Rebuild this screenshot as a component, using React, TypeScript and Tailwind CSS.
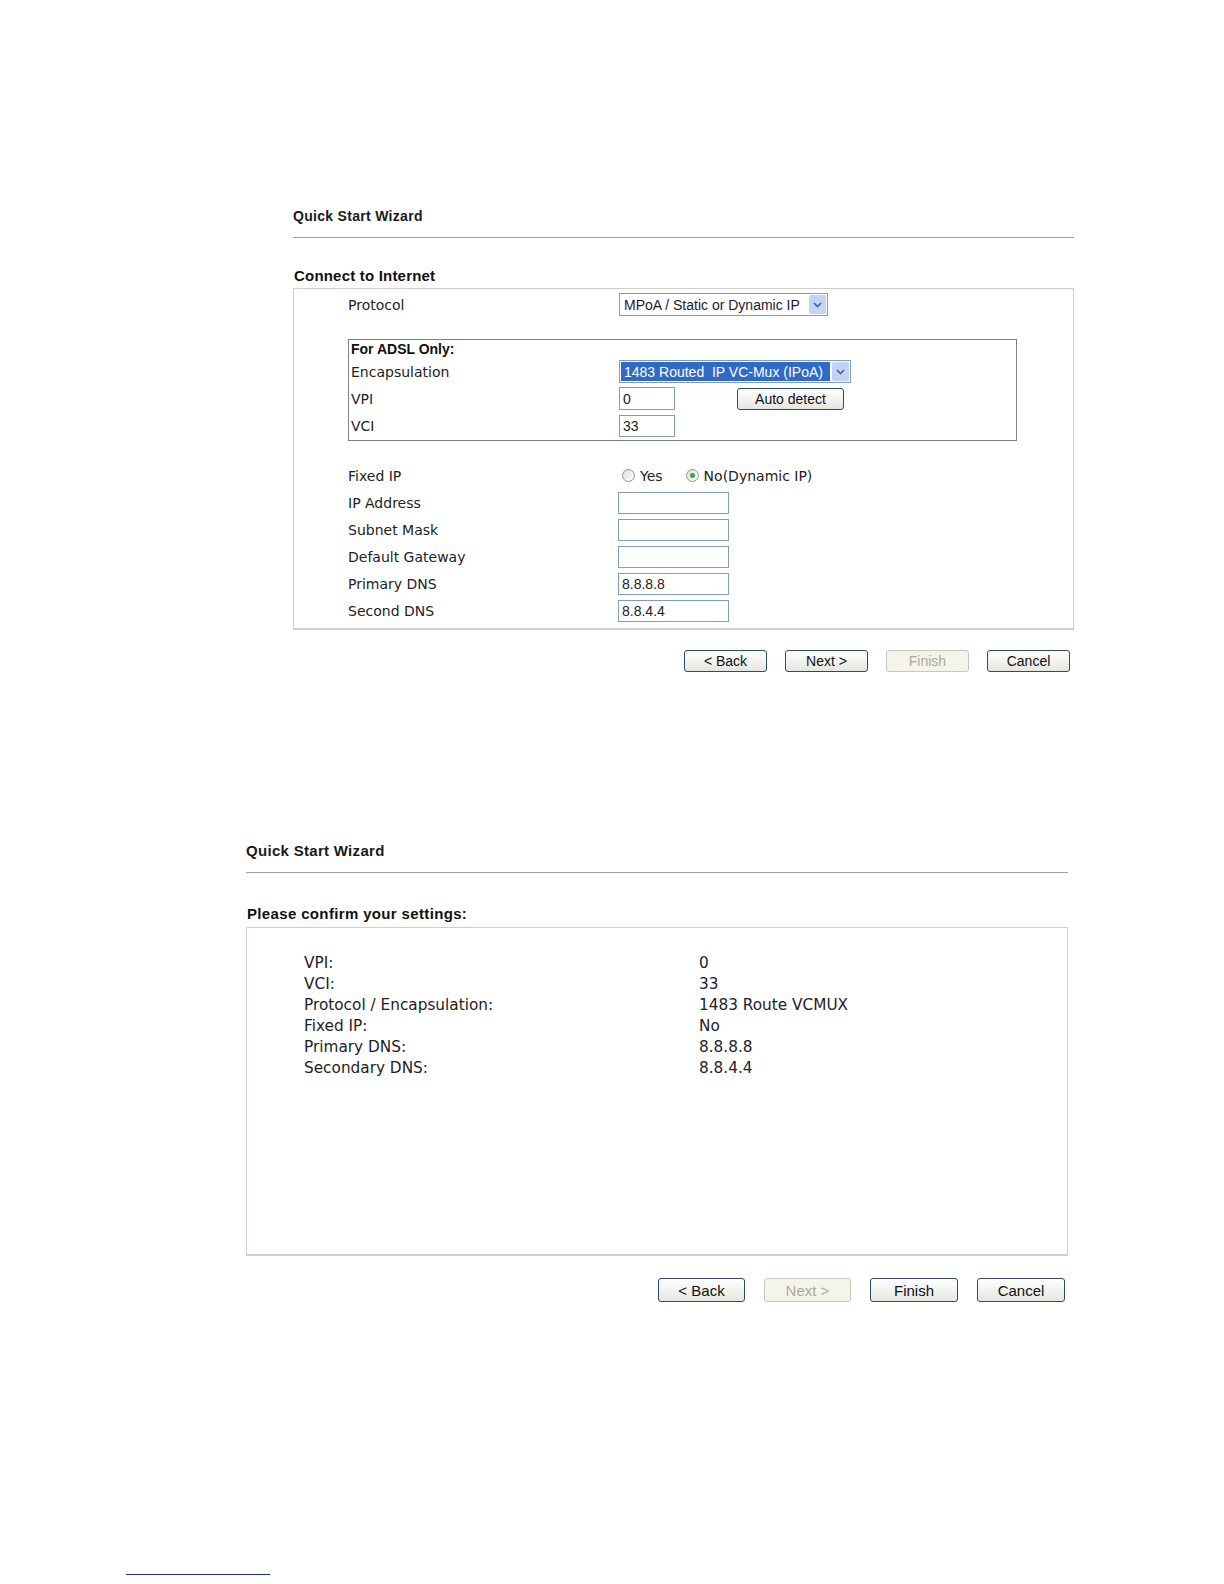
import React from "react";

const verdana = "font-['DejaVu_Sans',Verdana,sans-serif]";
const arial = "font-['Liberation_Sans',Arial,sans-serif]";

function Chevron() {
  return (
    <svg width="9" height="6" viewBox="0 0 9 6">
      <polyline points="1,1 4.5,4.5 8,1" fill="none" stroke="#4d6185" strokeWidth="1.6" />
    </svg>
  );
}

function Select({ text, width, highlighted }: { text: string; width: string; highlighted?: boolean }) {
  return (
    <div className={`flex h-[23px] items-center border border-[#7f9db9] bg-white p-[1px] ${width} ${arial}`}>
      <div
        className={`flex h-full flex-1 items-center whitespace-pre px-[3px] text-[14px] leading-none ${
          highlighted ? "bg-[#316ac5] text-white" : "text-[#1a1a2e]"
        }`}
      >
        {text}
      </div>
      <div className="ml-[2px] flex h-full w-[17px] items-center justify-center rounded-[2px] bg-[#c1d3fb]">
        <Chevron />
      </div>
    </div>
  );
}

function Input({ value, width, height = "h-[22px]" }: { value?: string; width: string; height?: string }) {
  return (
    <div
      className={`flex items-center border border-[#7f9db9] bg-white pl-[3px] text-[14px] leading-none text-[#222] ${width} ${height} ${arial}`}
    >
      {value}
    </div>
  );
}

function Radio({ checked }: { checked?: boolean }) {
  return (
    <span className="flex h-[13px] w-[13px] items-center justify-center rounded-full border border-[#8a9aa8] bg-gradient-to-br from-[#dcdcd6] to-white">
      {checked && <span className="h-[5px] w-[5px] rounded-full bg-[#3ea53e]" />}
    </span>
  );
}

function Button({
  label,
  disabled,
  size = "h-[22px] w-[83px] text-[14px]",
}: {
  label: string;
  disabled?: boolean;
  size?: string;
}) {
  return (
    <div
      className={`flex items-center justify-center rounded-[3px] border leading-none ${size} ${arial} ${
        disabled
          ? "border-[#c9c7ba] bg-[#f5f4ea] text-[#aca899]"
          : "border-[#2c4a6b] bg-gradient-to-b from-white to-[#e6e6e0] text-[#111]"
      }`}
    >
      {label}
    </div>
  );
}

function FormRow({ label, children }: { label: string; children?: React.ReactNode }) {
  return (
    <div className="grid h-[27px] grid-cols-[270px_1fr] items-center">
      <span className="text-[14px] leading-none text-[#222]">{label}</span>
      <div className="flex items-center">{children}</div>
    </div>
  );
}

function ConnectStep() {
  return (
    <div className={`ml-[293px] w-[781px] pt-[207px] ${verdana}`}>
      <div className={`h-[18px] text-[14px] font-bold leading-[18px] tracking-[0.3px] text-[#1a1a1a] ${arial}`}>
        Quick Start Wizard
      </div>
      <div className="mt-[12px] border-t border-[#a0a0a0]" />
      <div className={`mt-[29px] ml-[1px] h-[18px] text-[15px] font-bold leading-[18px] tracking-[0.2px] text-[#111] ${arial}`}>
        Connect to Internet
      </div>
      <div className="mt-[3px] border border-b-2 border-[#cfcfc8] pl-[54px] pt-[4px] pb-[4px]">
        <div className="grid h-[23px] grid-cols-[271px_1fr] items-center">
          <span className="text-[14px] leading-none text-[#222]">Protocol</span>
          <Select text="MPoA / Static or Dynamic IP" width="w-[209px]" />
        </div>

        <div className="mt-[23px] mr-[56px] border border-[#808080] pl-[2px] pb-[3px]">
          <div className={`h-[18px] text-[14px] font-bold leading-[18px] text-[#111] ${arial}`}>For ADSL Only:</div>
          <div className="mt-[2px] grid h-[23px] grid-cols-[268px_1fr] items-center">
            <span className="text-[14px] leading-none text-[#222]">Encapsulation</span>
            <Select text="1483 Routed  IP VC-Mux (IPoA)" width="w-[232px]" highlighted />
          </div>
          <div className="mt-[4px] grid h-[23px] grid-cols-[268px_1fr] items-center">
            <span className="text-[14px] leading-none text-[#222]">VPI</span>
            <div className="flex items-center">
              <Input value="0" width="w-[56px]" height="h-[23px]" />
              <div className="ml-[62px]">
                <Button label="Auto detect" size="h-[22px] w-[107px] text-[14px]" />
              </div>
            </div>
          </div>
          <div className="mt-[5px] grid h-[22px] grid-cols-[268px_1fr] items-center">
            <span className="text-[14px] leading-none text-[#222]">VCI</span>
            <Input value="33" width="w-[56px]" />
          </div>
        </div>

        <div className="mt-[21px]">
          <FormRow label="Fixed IP">
            <div className="ml-[4px] flex items-center gap-[5px] text-[14px] leading-none text-[#222]">
              <Radio />
              <span>Yes</span>
              <span className="ml-[13px]" />
              <Radio checked />
              <span>No(Dynamic IP)</span>
            </div>
          </FormRow>
          <FormRow label="IP Address">
            <Input width="w-[111px]" />
          </FormRow>
          <FormRow label="Subnet Mask">
            <Input width="w-[111px]" />
          </FormRow>
          <FormRow label="Default Gateway">
            <Input width="w-[111px]" />
          </FormRow>
          <FormRow label="Primary DNS">
            <Input value="8.8.8.8" width="w-[111px]" />
          </FormRow>
          <FormRow label="Second DNS">
            <Input value="8.8.4.4" width="w-[111px]" />
          </FormRow>
        </div>
      </div>
      <div className="mt-[20px] mr-[4px] flex justify-end gap-[18px]">
        <Button label="< Back" />
        <Button label="Next >" />
        <Button label="Finish" disabled />
        <Button label="Cancel" />
      </div>
    </div>
  );
}

const summary = [
  ["VPI:", "0"],
  ["VCI:", "33"],
  ["Protocol / Encapsulation:", "1483 Route VCMUX"],
  ["Fixed IP:", "No"],
  ["Primary DNS:", "8.8.8.8"],
  ["Secondary DNS:", "8.8.4.4"],
];

function ConfirmStep() {
  return (
    <div className={`ml-[246px] w-[822px] mt-[170px] ${verdana}`}>
      <div className={`h-[18px] text-[15px] font-bold leading-[18px] tracking-[0.3px] text-[#1a1a1a] ${arial}`}>
        Quick Start Wizard
      </div>
      <div className="mt-[12px] border-t border-[#a0a0a0]" />
      <div className={`mt-[32px] ml-[1px] h-[18px] text-[15px] font-bold leading-[18px] tracking-[0.35px] text-[#111] ${arial}`}>
        Please confirm your settings:
      </div>
      <div className="mt-[4px] h-[329px] border border-b-2 border-[#cfcfc8] pl-[57px] pt-[25px]">
        {summary.map(([label, value]) => (
          <div key={label} className="grid h-[21px] grid-cols-[395px_1fr] items-center text-[15.3px] leading-none text-[#222]">
            <span>{label}</span>
            <span>{value}</span>
          </div>
        ))}
      </div>
      <div className="mt-[22px] mr-[3px] flex justify-end gap-[19px]">
        <Button label="< Back" size="h-[24px] w-[87px] text-[15px]" />
        <Button label="Next >" disabled size="h-[24px] w-[87px] text-[15px]" />
        <Button label="Finish" size="h-[24px] w-[88px] text-[15px]" />
        <Button label="Cancel" size="h-[24px] w-[88px] text-[15px]" />
      </div>
    </div>
  );
}

export default function App() {
  return (
    <main className="h-[1584px] w-[1224px] overflow-hidden bg-white">
      <ConnectStep />
      <ConfirmStep />
      <div className="ml-[126px] mt-[272px] w-[144px] border-t border-[#1f2f6f]" />
    </main>
  );
}
